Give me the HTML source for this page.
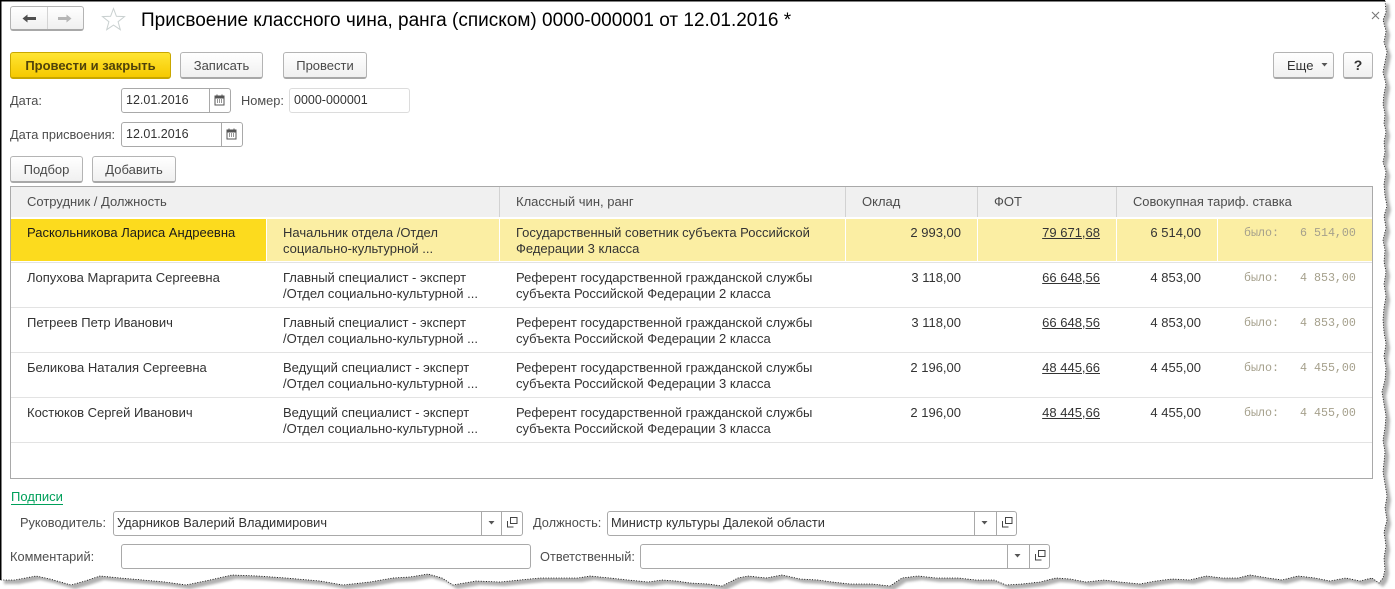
<!DOCTYPE html>
<html lang="ru"><head><meta charset="utf-8"><title>Присвоение классного чина</title>
<style>
html,body{margin:0;padding:0;background:#fff}
#p{position:relative;width:1395px;height:589px;overflow:hidden;background:#fff;font:13px/16px "Liberation Sans",Arial,sans-serif;color:#333}
#p div,#p span.a,#p svg{position:absolute}
.t{white-space:nowrap}
.l{color:#4d4d4d;white-space:nowrap;font-size:12.8px}
.b{box-sizing:border-box;border:1px solid #b4b4b4;border-bottom:2px solid #a8a8a8;border-radius:3px;background:linear-gradient(#fff,#f0f0f0);color:#4a4a4a;text-align:center;line-height:23px;white-space:nowrap}
.f{box-sizing:border-box;border:1px solid #a9a9a9;border-radius:3px;background:#fff;color:#333;white-space:nowrap;padding-left:4px;line-height:22px;font-size:12.8px}
.d{font-size:12.5px}
.v{width:1px;background:#a9a9a9;top:0;bottom:0}
.s{background:#bdbdbd}
.r{text-align:right;white-space:nowrap}
.m{font:11.67px/16px "Liberation Mono",monospace;color:#a5a08c;white-space:pre}
.h{background:#f0f0f0;color:#4d4d4d}
</style></head><body><div id="p">

<svg style="left:0;top:0" width="1395" height="589" viewBox="0 0 1395 589">
<defs><filter id="bl" x="-2%" y="-2%" width="104%" height="104%"><feGaussianBlur stdDeviation="1.3"/></filter></defs>
<polygon id="shadow" filter="url(#bl)" fill="#b0b0b0" transform="translate(4,4)" points="0,0 1385,0 1386,12 1383,20 1386,31 1384,42 1387,52 1385,62 1383,72 1386,84 1384,94 1383,104 1385,114 1384,123 1386,132 1384,142 1385,152 1383,162 1386,172 1384,184 1385,196 1387,206 1384,216 1386,228 1383,240 1385,250 1384,262 1386,272 1384,284 1386,296 1384,308 1383,320 1384,332 1386,344 1384,356 1386,368 1385,380 1382,392 1384,404 1386,416 1385,428 1383,440 1385,452 1384,462 1383,472 1385,484 1387,496 1385,508 1387,520 1384,532 1386,546 1384,558 1385,570 1383,578 1379,583 1372,578 1360,581 1346,578 1330,581 1315,578 1298,576 1282,580 1268,578 1250,575 1238,578 1222,578 1206,576 1190,580 1172,579 1156,581 1140,584 1120,582 1104,580 1086,582 1070,579 1056,578 1040,582 1022,584 1006,585 994,580 976,580 958,578 936,578 918,576 902,578 890,586 872,584 850,584 832,582 818,580 800,579 782,575 766,578 748,576 738,578 722,586 708,584 690,583 676,581 662,580 648,582 628,580 610,578 590,576 578,578 560,578 540,578 520,580 500,582 476,581 453,585 442,578 428,574 410,577 393,578 370,582 343,585 320,581 286,578 258,576 232,575 210,580 186,585 165,582 143,580 120,578 100,576 85,581 71,585 50,579 36,576 15,580 0,580"/>
<polygon id="page" fill="#fff" stroke="#000" stroke-width="0.8" stroke-dasharray="1 1.6" points="0,0 1385,0 1386,12 1383,20 1386,31 1384,42 1387,52 1385,62 1383,72 1386,84 1384,94 1383,104 1385,114 1384,123 1386,132 1384,142 1385,152 1383,162 1386,172 1384,184 1385,196 1387,206 1384,216 1386,228 1383,240 1385,250 1384,262 1386,272 1384,284 1386,296 1384,308 1383,320 1384,332 1386,344 1384,356 1386,368 1385,380 1382,392 1384,404 1386,416 1385,428 1383,440 1385,452 1384,462 1383,472 1385,484 1387,496 1385,508 1387,520 1384,532 1386,546 1384,558 1385,570 1383,578 1379,583 1372,578 1360,581 1346,578 1330,581 1315,578 1298,576 1282,580 1268,578 1250,575 1238,578 1222,578 1206,576 1190,580 1172,579 1156,581 1140,584 1120,582 1104,580 1086,582 1070,579 1056,578 1040,582 1022,584 1006,585 994,580 976,580 958,578 936,578 918,576 902,578 890,586 872,584 850,584 832,582 818,580 800,579 782,575 766,578 748,576 738,578 722,586 708,584 690,583 676,581 662,580 648,582 628,580 610,578 590,576 578,578 560,578 540,578 520,580 500,582 476,581 453,585 442,578 428,574 410,577 393,578 370,582 343,585 320,581 286,578 258,576 232,575 210,580 186,585 165,582 143,580 120,578 100,576 85,581 71,585 50,579 36,576 15,580 0,580"/>
<rect x="0" y="0" width="1385" height="1.5" fill="#000"/>
<rect x="0" y="0" width="1.5" height="580" fill="#000"/>
</svg>

<!-- nav -->
<div class="b" style="left:10px;top:6px;width:74px;height:25px"></div>
<div class="s" style="left:47px;top:7px;width:1px;height:22px;background:#d4d4d4"></div>
<svg style="left:21px;top:13px" width="16" height="11" viewBox="0 0 16 11"><path d="M1.5 5.5 L6.5 1.5 V4 H15 V7 H6.5 V9.5 Z" fill="#4f4f4f"/></svg>
<svg style="left:57px;top:13px" width="16" height="11" viewBox="0 0 16 11"><path d="M14.5 5.5 L9.5 1.5 V4 H1 V7 H9.5 V9.5 Z" fill="#b5b5b5"/></svg>
<svg style="left:101px;top:7px" width="25" height="25" viewBox="0 0 25 25"><path d="M12.5 1.5 L15.4 9.3 L23.5 9.6 L17.1 14.7 L19.3 22.7 L12.5 18.1 L5.7 22.7 L7.9 14.7 L1.5 9.6 L9.6 9.3 Z" fill="#fff" stroke="#c9d0d0" stroke-width="1"/></svg>
<div class="t" style="left:141px;top:10px;font-size:19px;line-height:22px;color:#000">Присвоение классного чина, ранга (списком) 0000-000001 от 12.01.2016 *</div>
<svg style="left:1370px;top:10px" width="11" height="11" viewBox="0 0 11 11"><path d="M2 2 L9 9 M9 2 L2 9" stroke="#777" stroke-width="1.1" fill="none"/></svg>

<!-- toolbar -->
<div class="b" style="left:10px;top:52px;width:161px;height:27px;background:linear-gradient(#ffe533,#f6c900);border-color:#c9a700;color:#50430a;font-weight:bold;line-height:25px">Провести и закрыть</div>
<div class="b" style="left:180px;top:52px;width:83px;height:27px;line-height:25px">Записать</div>
<div class="b" style="left:283px;top:52px;width:84px;height:27px;line-height:25px">Провести</div>
<div class="b" style="left:1273px;top:52px;width:61px;height:27px;line-height:25px;text-align:left;padding-left:13px;color:#333">Еще</div>
<svg style="left:1321px;top:63px" width="7" height="4" viewBox="0 0 7 4"><path d="M0.5 0 H6.5 L3.5 3.5 Z" fill="#555"/></svg>
<div class="b" style="left:1343px;top:52px;width:30px;height:27px;line-height:25px;font-weight:bold;font-size:14px;color:#333">?</div>

<!-- dates -->
<div class="l" style="left:10px;top:93px">Дата:</div>
<div class="f d" style="left:121px;top:88px;width:110px;height:25px">12.01.2016<div class="v" style="left:87px"></div></div>
<svg style="left:214px;top:94px" width="11" height="12" viewBox="0 0 11 12"><path d="M1 2 H10 V11 H1 Z" fill="#fff" stroke="#555"/><rect x="1" y="2" width="9" height="2.5" fill="#555"/><path d="M3 6 h1 M5 6 h1 M7 6 h1 M3 8 h1 M5 8 h1 M7 8 h1" stroke="#555" stroke-width="1.2"/><path d="M3 .5 V2 M8 .5 V2" stroke="#555"/></svg>
<div class="l" style="left:241px;top:93px">Номер:</div>
<div class="f d" style="left:289px;top:88px;width:121px;height:25px;border-color:#dcdcdc">0000-000001</div>
<div class="l" style="left:10px;top:127px">Дата присвоения:</div>
<div class="f d" style="left:121px;top:122px;width:122px;height:25px">12.01.2016<div class="v" style="left:99px"></div></div>
<svg style="left:226px;top:128px" width="11" height="12" viewBox="0 0 11 12"><path d="M1 2 H10 V11 H1 Z" fill="#fff" stroke="#555"/><rect x="1" y="2" width="9" height="2.5" fill="#555"/><path d="M3 6 h1 M5 6 h1 M7 6 h1 M3 8 h1 M5 8 h1 M7 8 h1" stroke="#555" stroke-width="1.2"/><path d="M3 .5 V2 M8 .5 V2" stroke="#555"/></svg>

<div class="b" style="left:10px;top:156px;width:73px;height:27px;line-height:25px">Подбор</div>
<div class="b" style="left:92px;top:156px;width:84px;height:27px;line-height:25px">Добавить</div>

<!-- table -->
<div style="left:10px;top:186px;width:1363px;height:293px;box-sizing:border-box;border:1px solid #a9a9a9;background:#fff"></div>
<div class="h" style="left:11px;top:187px;width:1361px;height:30px"></div>
<div style="left:499px;top:187px;width:1px;height:30px;background:#d2d2d2"></div>
<div style="left:845px;top:187px;width:1px;height:30px;background:#d2d2d2"></div>
<div style="left:977px;top:187px;width:1px;height:30px;background:#d2d2d2"></div>
<div style="left:1116px;top:187px;width:1px;height:30px;background:#d2d2d2"></div>
<div class="t h" style="left:27px;top:194px">Сотрудник / Должность</div>
<div class="t h" style="left:516px;top:194px">Классный чин, ранг</div>
<div class="t h" style="left:862px;top:194px">Оклад</div>
<div class="t h" style="left:994px;top:194px">ФОТ</div>
<div class="t h" style="left:1133px;top:194px;font-size:12.9px">Совокупная тариф. ставка</div>

<div style="left:11px;top:219px;width:1361px;height:42px;background:#fbeea3"></div>
<div style="left:11px;top:219px;width:255px;height:42px;background:#fcdb1e"></div>
<div style="left:266px;top:219px;width:1px;height:42px;background:#fff"></div>
<div style="left:499px;top:219px;width:1px;height:42px;background:#fff"></div>
<div style="left:845px;top:219px;width:1px;height:42px;background:#fff"></div>
<div style="left:977px;top:219px;width:1px;height:42px;background:#fff"></div>
<div style="left:1116px;top:219px;width:1px;height:42px;background:#fff"></div>
<div style="left:1217px;top:219px;width:1px;height:42px;background:#fff"></div>
<div style="left:11px;top:262px;width:1361px;height:1px;background:#e3e3e3"></div>
<div style="left:11px;top:307px;width:1361px;height:1px;background:#e3e3e3"></div>
<div style="left:11px;top:352px;width:1361px;height:1px;background:#e3e3e3"></div>
<div style="left:11px;top:397px;width:1361px;height:1px;background:#e3e3e3"></div>
<div style="left:11px;top:442px;width:1361px;height:1px;background:#e3e3e3"></div>

<!-- row 1 -->
<div class="t" style="left:27px;top:225px;color:#1a1a1a">Раскольникова Лариса Андреевна</div>
<div class="t" style="left:283px;top:225px">Начальник отдела /Отдел<br>социально-культурной ...</div>
<div class="t" style="left:516px;top:225px">Государственный советник субъекта Российской<br>Федерации 3 класса</div>
<div class="r" style="right:434px;top:225px">2 993,00</div>
<div class="r" style="right:295px;top:225px;text-decoration:underline">79 671,68</div>
<div class="r" style="right:194px;top:225px">6 514,00</div>
<div class="m" style="left:1244px;top:225px">было:   6 514,00</div>
<!-- row 2 -->
<div class="t" style="left:27px;top:270px">Лопухова Маргарита Сергеевна</div>
<div class="t" style="left:283px;top:270px">Главный специалист - эксперт<br>/Отдел социально-культурной ...</div>
<div class="t" style="left:516px;top:270px">Референт государственной гражданской службы<br>субъекта Российской Федерации 2 класса</div>
<div class="r" style="right:434px;top:270px">3 118,00</div>
<div class="r" style="right:295px;top:270px;text-decoration:underline">66 648,56</div>
<div class="r" style="right:194px;top:270px">4 853,00</div>
<div class="m" style="left:1244px;top:270px">было:   4 853,00</div>
<!-- row 3 -->
<div class="t" style="left:27px;top:315px">Петреев Петр Иванович</div>
<div class="t" style="left:283px;top:315px">Главный специалист - эксперт<br>/Отдел социально-культурной ...</div>
<div class="t" style="left:516px;top:315px">Референт государственной гражданской службы<br>субъекта Российской Федерации 2 класса</div>
<div class="r" style="right:434px;top:315px">3 118,00</div>
<div class="r" style="right:295px;top:315px;text-decoration:underline">66 648,56</div>
<div class="r" style="right:194px;top:315px">4 853,00</div>
<div class="m" style="left:1244px;top:315px">было:   4 853,00</div>
<!-- row 4 -->
<div class="t" style="left:27px;top:360px">Беликова Наталия Сергеевна</div>
<div class="t" style="left:283px;top:360px">Ведущий специалист - эксперт<br>/Отдел социально-культурной ...</div>
<div class="t" style="left:516px;top:360px">Референт государственной гражданской службы<br>субъекта Российской Федерации 3 класса</div>
<div class="r" style="right:434px;top:360px">2 196,00</div>
<div class="r" style="right:295px;top:360px;text-decoration:underline">48 445,66</div>
<div class="r" style="right:194px;top:360px">4 455,00</div>
<div class="m" style="left:1244px;top:360px">было:   4 455,00</div>
<!-- row 5 -->
<div class="t" style="left:27px;top:405px">Костюков Сергей Иванович</div>
<div class="t" style="left:283px;top:405px">Ведущий специалист - эксперт<br>/Отдел социально-культурной ...</div>
<div class="t" style="left:516px;top:405px">Референт государственной гражданской службы<br>субъекта Российской Федерации 3 класса</div>
<div class="r" style="right:434px;top:405px">2 196,00</div>
<div class="r" style="right:295px;top:405px;text-decoration:underline">48 445,66</div>
<div class="r" style="right:194px;top:405px">4 455,00</div>
<div class="m" style="left:1244px;top:405px">было:   4 455,00</div>

<!-- footer -->
<div class="t" style="left:11px;top:489px;color:#00a05a;border-bottom:1px solid #00a05a;line-height:15px">Подписи</div>
<div class="l" style="left:20px;top:515px">Руководитель:</div>
<div class="f" style="left:113px;top:511px;width:410px;height:25px;padding-left:3px">Ударников Валерий Владимирович<div class="v" style="left:367px"></div><div class="v" style="left:387px"></div></div>
<svg style="left:488px;top:521px" width="7" height="4" viewBox="0 0 7 4"><path d="M0.5 0 H6.5 L3.5 3.5 Z" fill="#555"/></svg>
<svg style="left:507px;top:517px" width="11" height="11" viewBox="0 0 11 11"><path d="M3.5 .5 H10 V6.5 H3.5 Z M.5 4 V10 H6.5" fill="none" stroke="#444"/></svg>
<div class="l" style="left:533px;top:515px">Должность:</div>
<div class="f" style="left:607px;top:511px;width:410px;height:25px;padding-left:3px">Министр культуры Далекой области<div class="v" style="left:366px"></div><div class="v" style="left:388px"></div></div>
<svg style="left:981px;top:521px" width="7" height="4" viewBox="0 0 7 4"><path d="M0.5 0 H6.5 L3.5 3.5 Z" fill="#555"/></svg>
<svg style="left:1002px;top:517px" width="11" height="11" viewBox="0 0 11 11"><path d="M3.5 .5 H10 V6.5 H3.5 Z M.5 4 V10 H6.5" fill="none" stroke="#444"/></svg>
<div class="l" style="left:10px;top:549px">Комментарий:</div>
<div class="f" style="left:121px;top:544px;width:410px;height:25px"></div>
<div class="l" style="left:540px;top:549px">Ответственный:</div>
<div class="f" style="left:640px;top:544px;width:410px;height:25px"><div class="v" style="left:366px"></div><div class="v" style="left:388px"></div></div>
<svg style="left:1014px;top:554px" width="7" height="4" viewBox="0 0 7 4"><path d="M0.5 0 H6.5 L3.5 3.5 Z" fill="#555"/></svg>
<svg style="left:1035px;top:550px" width="11" height="11" viewBox="0 0 11 11"><path d="M3.5 .5 H10 V6.5 H3.5 Z M.5 4 V10 H6.5" fill="none" stroke="#444"/></svg>

</div></body></html>
